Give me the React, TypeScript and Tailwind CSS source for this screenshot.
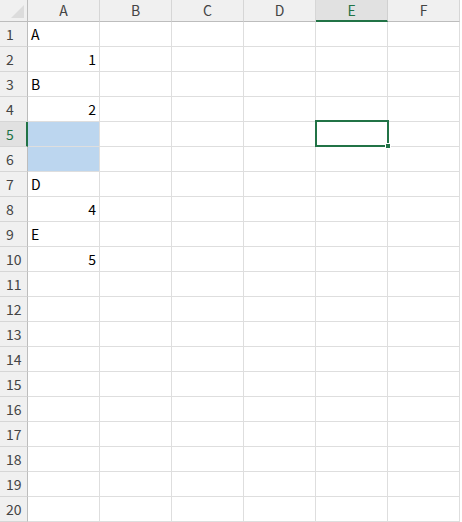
import React from "react";

const cols = ["A", "B", "C", "D", "E", "F"];
const rows = Array.from({ length: 20 }, (_, i) => i + 1);

const values: Record<string, string | number> = {
  A1: "A",
  A2: 1,
  A3: "B",
  A4: 2,
  A7: "D",
  A8: 4,
  A9: "E",
  A10: 5,
};

const font = { fontFamily: '"Noto Sans CJK JP", "Noto Sans", sans-serif' };

function Cell({ id }: { id: string }) {
  const v = values[id];
  const selected = id === "A5" || id === "A6";
  const isNum = typeof v === "number";
  return (
    <div
      className={`flex h-[25px] items-center border-b border-r border-[#dedede] px-[3px] text-[14px] text-black ${
        isNum ? "justify-end" : "justify-start"
      } ${selected ? "bg-[#bcd6ef]" : "bg-white"}`}
    >
      {v}
    </div>
  );
}

export default function App() {
  return (
    <div className="relative h-[522px] w-[462px] overflow-hidden bg-white" style={font}>
      <div className="grid grid-cols-[28px_repeat(6,72px)]">
        {/* corner */}
        <div className="flex h-[22px] items-end justify-end border-b border-r border-[#bdbdbd] bg-[#f0f0f0] p-[3px]">
          <svg width="13" height="13" viewBox="0 0 13 13">
            <polygon points="13,0 13,13 0,13" fill="#dcdcdc" />
          </svg>
        </div>
        {cols.map((c) => (
          <div
            key={c}
            className={`flex h-[22px] items-center justify-center border-r text-[14px] ${
              c === "E"
                ? "border-b-2 border-b-[#217346] border-r-[#d0d0d0] bg-[#e1e1e1] text-[#217346]"
                : "border-b border-b-[#bdbdbd] border-r-[#d6d6d6] bg-[#f0f0f0] text-[#444]"
            }`}
          >
            {c}
          </div>
        ))}
        {rows.map((r) => (
          <React.Fragment key={r}>
            <div
              className={`flex h-[25px] items-center border-b border-[#d6d6d6] pl-[6px] text-[14px] ${
                r === 5
                  ? "border-r-2 border-r-[#217346] bg-[#e1e1e1] text-[#217346]"
                  : "border-r border-r-[#bdbdbd] bg-[#f0f0f0] text-[#444]"
              }`}
            >
              {r}
            </div>
            {cols.map((c) => (
              <Cell key={c + r} id={c + r} />
            ))}
          </React.Fragment>
        ))}
      </div>
      {/* active cell E5 */}
      <div className="pointer-events-none absolute left-[315px] top-[120px] h-[27px] w-[74px] border-2 border-[#217346]" />
      <div className="absolute left-[385px] top-[143px] h-[6px] w-[6px] border border-white bg-[#217346]" />
    </div>
  );
}
